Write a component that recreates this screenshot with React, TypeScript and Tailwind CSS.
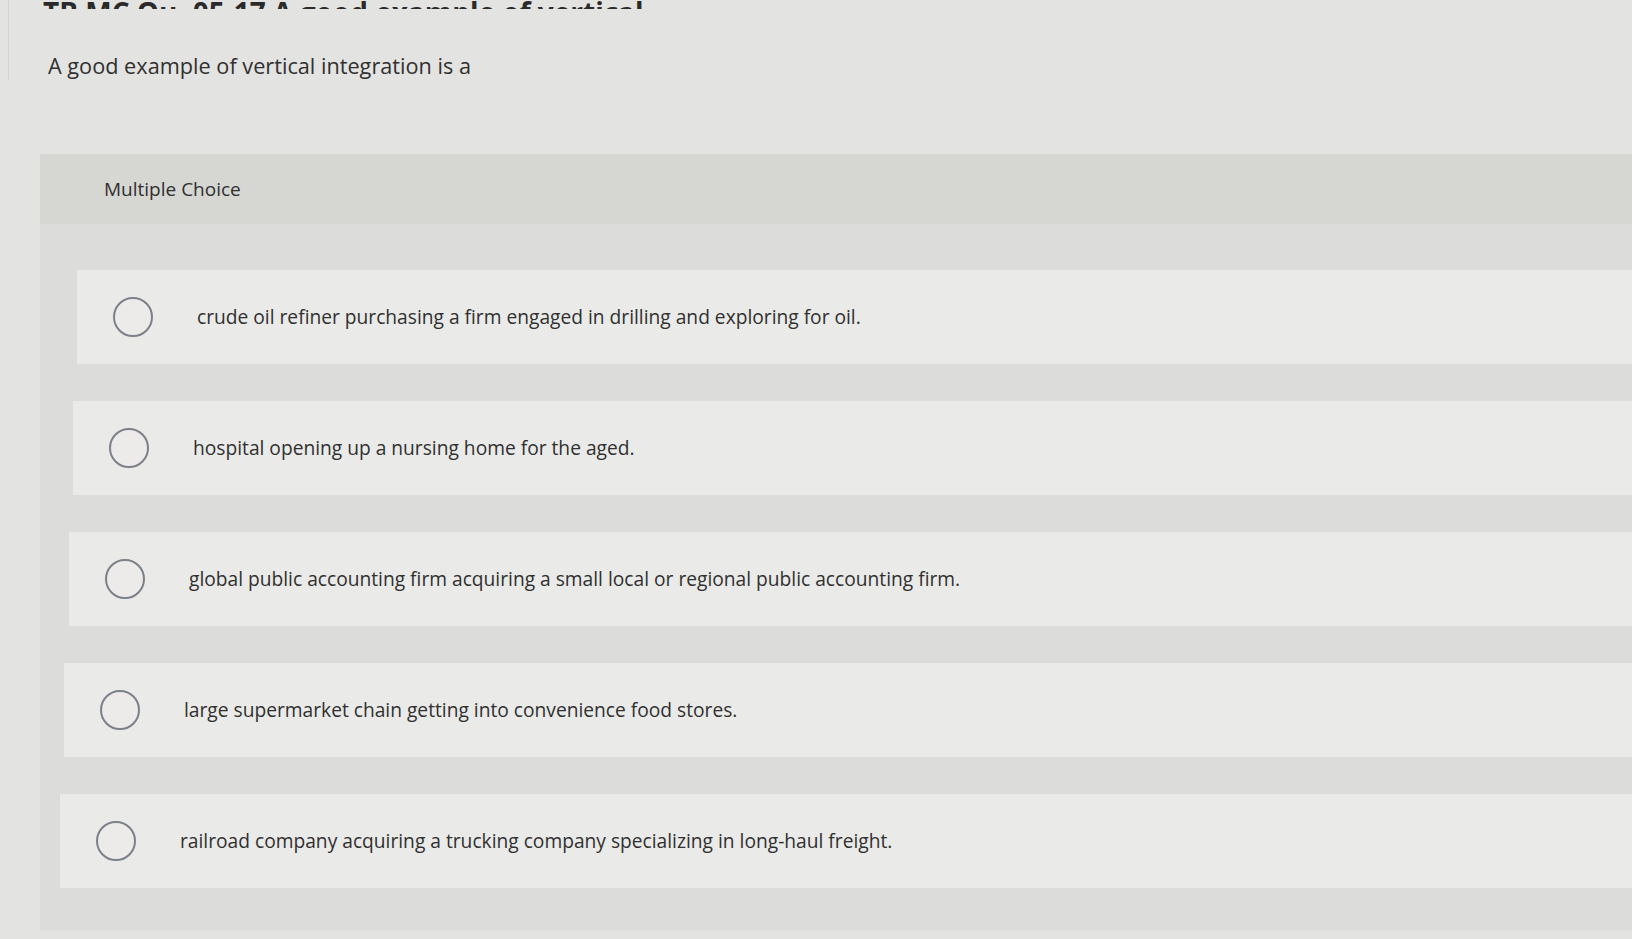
const options = [
  { text: "crude oil refiner purchasing a firm engaged in drilling and exploring for oil.", shift: "ml-[37px]" },
  { text: "hospital opening up a nursing home for the aged.", shift: "ml-[33px]" },
  { text: "global public accounting firm acquiring a small local or regional public accounting firm.", shift: "ml-[29px]" },
  { text: "large supermarket chain getting into convenience food stores.", shift: "ml-[24px]" },
  { text: "railroad company acquiring a trucking company specializing in long-haul freight.", shift: "ml-[20px]" },
];

const Radio = () => (
  <span className="h-10 w-10 shrink-0 rounded-full border-2 border-[#7c8089] bg-[#ecebe9]" />
);

export default function App() {
  return (
    <div
      className="min-h-[939px] w-full overflow-hidden bg-[#e3e3e1] text-[#303030]"
      style={{ fontFamily: "'Open Sans', Lato, sans-serif" }}
    >
      <div className="flex">
        <div className="ml-2 h-[80px] w-px bg-[#d2d2d0]" />
        <div className="flex-1">
          {/* heading, cut by the top edge */}
          <div className="flex h-[9px] items-end overflow-hidden pl-[34px]">
            <h2 className="translate-y-[16px] text-[28px] font-bold leading-[26px] text-[#2a2a2a]">
              TB MC Qu. 05-17 A good example of vertical...
            </h2>
          </div>
          <p className="mt-[43px] pl-[39px] text-[21.7px] leading-[28px]">
            A good example of vertical integration is a
          </p>
        </div>
      </div>

      <section className="mt-[74px] ml-[40px] bg-[#dcdcda] pb-[42px]">
        <div className="flex h-[70px] items-center bg-[#d6d6d3] pl-[64px] text-[19px]">
          Multiple Choice
        </div>
        <div className="flex flex-col gap-[37px] pt-[46px]">
          {options.map((o) => (
            <label
              key={o.text}
              className={`flex h-[94px] items-center gap-[44px] bg-[#eaeae8] pl-[36px] text-[19.2px] ${o.shift}`}
            >
              <Radio />
              <span>{o.text}</span>
            </label>
          ))}
        </div>
      </section>
    </div>
  );
}
